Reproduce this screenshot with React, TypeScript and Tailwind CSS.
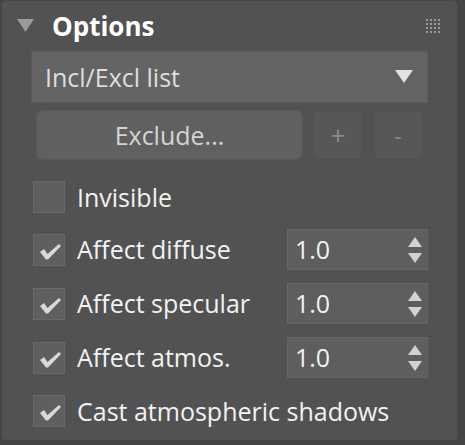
import React from "react";

const font = { fontFamily: '"Open Sans", "Noto Sans", "Liberation Sans", sans-serif' };

function Check({ checked }: { checked: boolean }) {
  return (
    <div className="w-[32px] h-[32px] shrink-0 bg-[#5f5f5f] border border-[#686868] relative">
      {checked && (
        <svg width="32" height="32" viewBox="0 0 32 32" className="absolute left-[-1px] top-[-1px]">
          <path d="M7 18 L11 15 L14.5 20 L26 10 L28 12 L15 25.5 L13 25.5 Z" fill="#d9d9d9" />
        </svg>
      )}
    </div>
  );
}

function Spinner() {
  return (
    <div className="w-[141px] h-[41px] bg-[#5e5e5e] border border-[#666666] relative flex items-center shrink-0">
      <span className="ml-[7px] text-[25px] text-[#f2f2f2] leading-none">1.0</span>
      <svg width="16" height="28" viewBox="0 0 16 28" className="absolute left-[119px] top-[7px]">
        <path d="M1 10 L8 0 L15 10 Z" fill="#d2d2d2" />
        <path d="M1 16 L15 16 L8 26 Z" fill="#d2d2d2" />
      </svg>
    </div>
  );
}

function Row({ label, spinner, className }: { label: string; spinner?: boolean; className: string }) {
  return (
    <div className={"flex items-center " + className}>
      <div className="ml-[32px]">
        <Check checked={true} />
      </div>
      <span className="ml-[12px] flex-1 text-[25px] text-[#f2f2f2] leading-none">{label}</span>
      {spinner && <div className="mr-[29px]"><Spinner /></div>}
    </div>
  );
}

export default function App() {
  return (
    <div className="w-[465px] h-[445px] bg-[#444444] relative overflow-hidden" style={font}>
      <div className="absolute left-[1px] top-0 w-[457px] h-[441px] bg-[#525252] border border-[#484848] rounded-[5px] flex flex-col">
        <div className="h-[50px] flex items-center relative">
          <svg width="17" height="14" viewBox="0 0 17 14" className="ml-[15px]">
            <path d="M0 0 L17 0 L8.5 13 Z" fill="#9a9a9a" />
          </svg>
          <span className="ml-[18px] text-[26px] font-bold text-white leading-none">Options</span>
          <div className="ml-auto mr-[17px] grid grid-cols-4 gap-[2px]">
            {Array.from({ length: 16 }).map((_, i) => (
              <div key={i} className="w-[2px] h-[2px] bg-[#9a9a9a]" />
            ))}
          </div>
        </div>
        <div className="ml-[29px] w-[397px] h-[52px] bg-[#646464] border border-[#5a5a5a] flex items-center relative">
          <span className="ml-[13px] text-[25px] text-[#dedede] leading-none">Incl/Excl list</span>
          <svg width="18" height="14" viewBox="0 0 18 14" className="absolute left-[363px] top-[18px]">
            <path d="M0 0 L18 0 L9 13 Z" fill="#e2e2e2" />
          </svg>
        </div>
        <div className="mt-[7px] ml-[34px] flex gap-[10px]">
          <div className="w-[267px] h-[50px] rounded-[7px] bg-[#606060] border border-[#595959] flex items-center justify-center">
            <span className="text-[25px] text-[#d4d4d4] leading-none">Exclude...</span>
          </div>
          <div className="w-[50px] h-[50px] rounded-[7px] bg-[#575757] border border-[#505050] flex items-center justify-center">
            <span className="text-[25px] text-[#8c8c8c] leading-none">+</span>
          </div>
          <div className="w-[50px] h-[50px] rounded-[7px] bg-[#575757] border border-[#505050] flex items-center justify-center">
            <span className="text-[22px] text-[#8c8c8c] leading-none">-</span>
          </div>
        </div>
        <div className="mt-[21px] flex items-center">
          <div className="ml-[31px]">
            <Check checked={false} />
          </div>
          <span className="ml-[12px] text-[25px] text-[#f2f2f2] leading-none">Invisible</span>
        </div>
        <Row label="Affect diffuse" spinner className="mt-[16px] h-[41px] -ml-[1px]" />
        <Row label="Affect specular" spinner className="mt-[13px] h-[41px] -ml-[1px]" />
        <Row label="Affect atmos." spinner className="mt-[13px] h-[41px] -ml-[1px]" />
        <Row label="Cast atmospheric shadows" className="mt-[17px] h-[32px] -ml-[1px]" />
      </div>
    </div>
  );
}
